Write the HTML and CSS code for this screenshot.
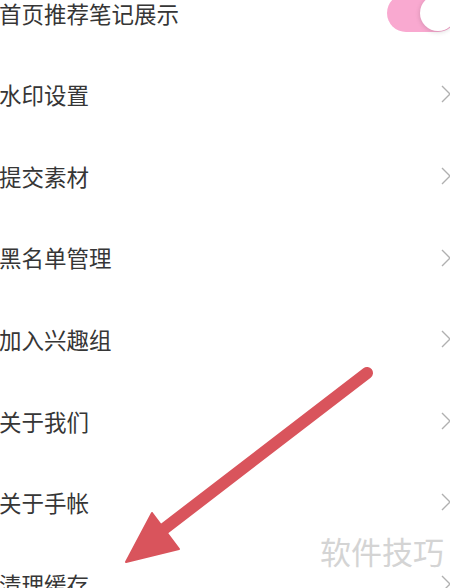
FILE: index.html
```html
<!DOCTYPE html>
<html>
<head>
    <title>设置</title>
    <link rel="stylesheet" href="styles.css">
</head>
<body>
    <div class="settings">
        <div class="row">
            <span class="label">首页推荐笔记展示</span>
            <div class="switch on"><div class="knob"></div></div>
        </div>
        <div class="row">
            <span class="label">水印设置</span>
            <svg class="chevron" width="12" height="20" viewBox="0 0 12 20"><path d="M2 2 L10 10 L2 18" /></svg>
        </div>
        <div class="row">
            <span class="label">提交素材</span>
            <svg class="chevron" width="12" height="20" viewBox="0 0 12 20"><path d="M2 2 L10 10 L2 18" /></svg>
        </div>
        <div class="row">
            <span class="label">黑名单管理</span>
            <svg class="chevron" width="12" height="20" viewBox="0 0 12 20"><path d="M2 2 L10 10 L2 18" /></svg>
        </div>
        <div class="row">
            <span class="label">加入兴趣组</span>
            <svg class="chevron" width="12" height="20" viewBox="0 0 12 20"><path d="M2 2 L10 10 L2 18" /></svg>
        </div>
        <div class="row">
            <span class="label">关于我们</span>
            <svg class="chevron" width="12" height="20" viewBox="0 0 12 20"><path d="M2 2 L10 10 L2 18" /></svg>
        </div>
        <div class="row">
            <span class="label">关于手帐</span>
            <svg class="chevron" width="12" height="20" viewBox="0 0 12 20"><path d="M2 2 L10 10 L2 18" /></svg>
        </div>
        <div class="row last">
            <span class="label">清理缓存</span>
            <svg class="chevron" width="12" height="20" viewBox="0 0 12 20"><path d="M2 2 L10 10 L2 18" /></svg>
        </div>
    </div>

    <!-- annotation drawn over the screenshot -->
    <svg class="arrow" width="450" height="588" viewBox="0 0 450 588">
        <line x1="367" y1="373" x2="160" y2="532" />
        <polygon points="152,513 179,549 126,562" />
    </svg>
    <div class="watermark">软件技巧</div>
</body>
</html>
```

FILE: styles.css
```css
html, body {
    margin: 0;
    padding: 0;
    background: #fff;
    overflow: hidden;
}
body {
    width: 450px;
    height: 588px;
    position: relative;
    font-family: "Noto Sans CJK SC", "Noto Sans", sans-serif;
}
.settings {
    margin-top: -28px;
    height: 616px;
    overflow: hidden;
}
.row {
    height: 81.6px;
    display: flex;
    align-items: center;
    justify-content: space-between;
}
.label {
    font-size: 22.5px;
    color: #363636;
    margin-left: -1px;
    line-height: 1;
}
.chevron {
    margin-right: -2px;
}
.chevron path {
    fill: none;
    stroke: #b0b0b0;
    stroke-width: 1.4;
}
.switch {
    width: 70px;
    height: 38px;
    border-radius: 19px;
    background: #f9a9d0;
    margin-right: -7px;
    display: flex;
    align-items: center;
    justify-content: flex-end;
    padding-right: 1px;
    box-sizing: border-box;
}
.knob {
    width: 36px;
    height: 36px;
    border-radius: 50%;
    background: #fff;
    box-shadow: 0 1px 5px rgba(0,0,0,0.16);
}
.arrow {
    position: absolute;
    left: 0;
    top: 0;
}
.arrow line {
    stroke: #d9545c;
    stroke-width: 12;
    stroke-linecap: round;
}
.arrow polygon {
    fill: #d9545c;
    stroke: #d9545c;
    stroke-width: 2;
    stroke-linejoin: round;
}
.watermark {
    position: absolute;
    left: 320px;
    top: 532px;
    font-size: 31px;
    color: #d4d4d4;
    line-height: 1.2;
}
```
